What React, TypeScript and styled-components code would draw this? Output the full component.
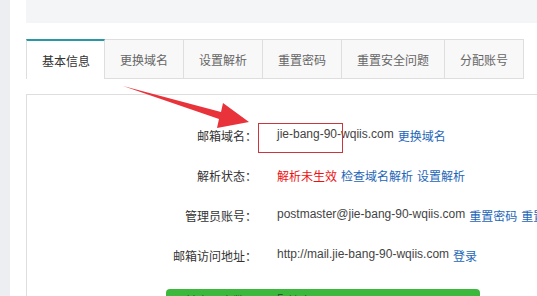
import styled, { createGlobalStyle } from 'styled-components';

const GlobalStyle = createGlobalStyle`
  html, body {
    margin: 0;
    padding: 0;
    background: #fff;
    overflow: hidden;
  }
  body {
    font-family: 'Liberation Sans', 'Noto Sans CJK SC', sans-serif;
    font-size: 12px;
    color: #333;
  }
`;

const Page = styled.div`
  position: relative;
  display: flex;
  width: 537px;
  height: 296px;
  overflow: hidden;
`;

const SideStrip = styled.div`
  width: 10px;
  flex-shrink: 0;
  background: #eceef2;
`;

const Main = styled.div`
  flex: 1;
  padding-left: 16px;
  display: flex;
  flex-direction: column;
  min-width: 0;
`;

const TopBox = styled.div`
  height: 23px;
  background: #f4f5f7;
  flex-shrink: 0;
`;

const Tabs = styled.div`
  display: flex;
  margin-top: 16px;
  height: 40px;
  flex-shrink: 0;
`;

const Tab = styled.div<{ $active?: boolean }>`
  box-sizing: border-box;
  height: 40px;
  padding: 0 15px;
  display: flex;
  align-items: center;
  white-space: nowrap;
  border: 1px solid #dedede;
  border-left: ${(p) => (p.$active ? '1px solid #dedede' : 'none')};
  border-top: ${(p) => (p.$active ? '2px solid #2898a6' : '1px solid #dedede')};
  border-bottom: ${(p) => (p.$active ? 'none' : '1px solid #dedede')};
  background: ${(p) => (p.$active ? '#fff' : '#f8f8f8')};
  color: ${(p) => (p.$active ? '#333' : '#666')};
  width: ${(p) => (p.$active ? '79px' : 'auto')};
`;

const Panel = styled.div`
  margin-top: 15px;
  border-top: 1px solid #dedede;
  border-left: 1px solid #dedede;
  padding-top: 20px;
  flex: 1;
`;

const Row = styled.div`
  display: flex;
  align-items: center;
  height: 40px;
  white-space: nowrap;
`;

const Label = styled.div<{ $w?: number }>`
  width: ${(p) => p.$w ?? 230}px;
  flex-shrink: 0;
  text-align: right;
  color: #333;
`;

const Value = styled.div`
  padding-left: 20px;
  color: #444;
  display: flex;
  gap: 4px;
`;

const Link = styled.span`
  color: #1e66b8;
`;

const Warn = styled.span`
  color: #ee1111;
`;

const Marked = styled.span`
  position: relative;
  &::before {
    content: '';
    position: absolute;
    left: -19px;
    top: -4px;
    width: 83px;
    height: 28px;
    border: 1px solid #c9363d;
  }
`;

const HighlightRow = styled(Row)`
  align-items: flex-start;
  padding-top: 14px;
  box-sizing: border-box;
`;

const Highlight = styled.div`
  margin-left: 139px;
  width: 314px;
  height: 20px;
  border-radius: 4px;
  background: #3cb83c;
  display: flex;
  align-items: flex-start;
  padding-top: 3px;
  box-sizing: border-box;
  & > div {
    color: #2a5a2a;
  }
`;

const Annotation = styled.svg`
  position: absolute;
  left: 0;
  top: 0;
  pointer-events: none;
`;

const tabs = ['基本信息', '更换域名', '设置解析', '重置密码', '重置安全问题', '分配账号'];

export default function App() {
  return (
    <>
      <GlobalStyle />
      <Page>
        <SideStrip />
        <Main>
          <TopBox />
          <Tabs>
            {tabs.map((t, i) => (
              <Tab key={t} $active={i === 0}>
                {t}
              </Tab>
            ))}
          </Tabs>
          <Panel>
            <Row>
              <Label>邮箱域名：</Label>
              <Value>
                <span>
                  <Marked>jie-bang-90-</Marked>wqiis.com
                </span>
                <Link>更换域名</Link>
              </Value>
            </Row>
            <Row>
              <Label>解析状态：</Label>
              <Value>
                <Warn>解析未生效</Warn>
                <Link>检查域名解析</Link>
                <Link>设置解析</Link>
              </Value>
            </Row>
            <Row>
              <Label>管理员账号：</Label>
              <Value>
                <span>postmaster@jie-bang-90-wqiis.com</span>
                <Link>重置密码</Link>
                <Link>重置安全问题</Link>
              </Value>
            </Row>
            <Row>
              <Label>邮箱访问地址：</Label>
              <Value>
                <span>http://mail.jie-bang-90-wqiis.com</span>
                <Link>登录</Link>
              </Value>
            </Row>
            <HighlightRow>
              <Highlight>
                <Label $w={91}>目前启用户数：</Label>
                <Value>
                  <span>5</span>
                  <span>扩容</span>
                </Value>
              </Highlight>
            </HighlightRow>
          </Panel>
        </Main>
        <Annotation width="537" height="296" viewBox="0 0 537 296">
          <polygon
            points="123,86 221,112 223,103 249,122 217,128 219,119"
            fill="#e8333b"
          />
        </Annotation>
      </Page>
    </>
  );
}
